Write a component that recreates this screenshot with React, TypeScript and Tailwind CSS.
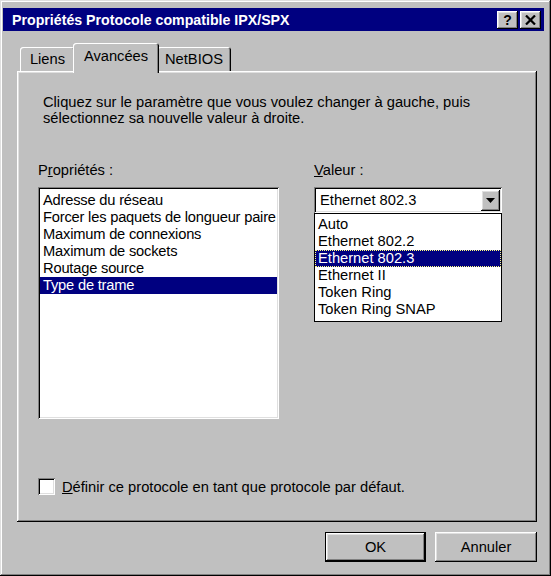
import { useState } from "react"

// Win95 bevels
const raised =
  "shadow-[inset_-1px_-1px_#000,inset_1px_1px_#fff,inset_-2px_-2px_#808080,inset_2px_2px_#dfdfdf]"
const sunken =
  "shadow-[inset_1px_1px_#808080,inset_-1px_-1px_#fff,inset_2px_2px_#000,inset_-2px_-2px_#dfdfdf]"

const PROPERTIES = [
  "Adresse du réseau",
  "Forcer les paquets de longueur paire",
  "Maximum de connexions",
  "Maximum de sockets",
  "Routage source",
  "Type de trame",
]

const VALUES = ["Auto", "Ethernet 802.2", "Ethernet 802.3", "Ethernet II", "Token Ring", "Token Ring SNAP"]

function Tab({ label, active, width }: { label: string; active?: boolean; width: string }) {
  if (active) {
    return (
      <div
        className={`relative z-10 -mx-[2px] -mb-[2px] h-[30px] ${width} flex items-start justify-center pt-[5px] rounded-t-[3px] bg-[#c0c0c0] shadow-[inset_1px_1px_#fff,inset_-1px_0_#000,inset_-2px_0_#808080]`}
      >
        {label}
      </div>
    )
  }
  return (
    <div
      className={`h-[24px] ${width} flex items-start justify-center pt-[4px] rounded-t-[3px] bg-[#c0c0c0] shadow-[inset_1px_1px_#fff,inset_-1px_0_#000,inset_-2px_0_#808080]`}
    >
      {label}
    </div>
  )
}

export default function App() {
  const [prop, setProp] = useState(5)
  const [value, setValue] = useState(2)
  const [isDefault, setIsDefault] = useState(false)

  return (
    <div className="w-[551px] h-[576px] bg-[#c0c0c0] flex flex-col pt-[8px] px-[3px] pb-[3px] font-['Liberation_Sans',Arial,sans-serif] text-[14.7px] leading-[16px] text-black select-none shadow-[inset_-1px_-1px_#000,inset_1px_1px_#dfdfdf,inset_-2px_-2px_#808080,inset_2px_2px_#fff]">
      {/* title bar */}
      <div className="h-[23px] mr-[4px] bg-[#000080] flex items-center pl-[9px] pr-[3px]">
        <span className="flex-1 font-bold text-white text-[14.2px]">Propriétés Protocole compatible IPX/SPX</span>
        <div className="flex gap-[2px]">
          <button className={`w-[21px] h-[18px] bg-[#c0c0c0] flex items-center justify-center font-bold text-[14px] leading-none ${raised}`}>
            ?
          </button>
          <button className={`w-[21px] h-[18px] bg-[#c0c0c0] flex items-center justify-center ${raised}`}>
            <svg width="11" height="10" viewBox="0 0 11 10">
              <path d="M1 0.5 L10 9.5 M10 0.5 L1 9.5" stroke="#000" strokeWidth="2.2" />
            </svg>
          </button>
        </div>
      </div>

      <div className="ml-[14px] mr-[11px] mt-[12px] flex flex-col">
        {/* tabs */}
        <div className="flex items-end h-[28px] pl-[3px] relative z-10">
          <Tab label="Liens" width="w-[55px]" />
          <Tab label="Avancées" width="w-[86px]" active />
          <Tab label="NetBIOS" width="w-[74px]" />
        </div>

        {/* panel */}
        <div className={`h-[451px] flex flex-col pt-[23px] pl-[21px] ${raised}`}>
          <p className="pl-[5px]">
            Cliquez sur le paramètre que vous voulez changer à gauche, puis
            <br />
            sélectionnez sa nouvelle valeur à droite.
          </p>

          <div className="flex gap-[35px] mt-[36px]">
            <div className="w-[241px] flex flex-col">
              <div className="mb-[9px]">
                P<span className="underline">r</span>opriétés :
              </div>
              <div className={`h-[232px] bg-white pt-[5px] px-[2px] ${sunken}`}>
                {PROPERTIES.map((p, i) => (
                  <div
                    key={p}
                    onClick={() => setProp(i)}
                    className={`h-[17px] leading-[17px] pl-[3px] whitespace-nowrap tracking-[-0.2px] ${i === prop ? "bg-[#000080] text-white" : ""}`}
                  >
                    {p}
                  </div>
                ))}
              </div>
            </div>

            <div className="w-[188px] flex flex-col">
              <div className="mb-[9px]">
                <span className="underline">V</span>aleur :
              </div>
              <div className="relative">
                <div className={`h-[26px] bg-white flex items-center p-[2px] ${sunken}`}>
                  <span className="flex-1 pl-[4px]">{VALUES[value]}</span>
                  <div className={`w-[19px] h-[21px] bg-[#c0c0c0] flex items-center justify-center ${raised}`}>
                    <svg width="9" height="5" viewBox="0 0 9 5">
                      <path d="M0 0 H9 L4.5 5 Z" fill="#000" />
                    </svg>
                  </div>
                </div>
                <div className="absolute top-[26px] left-0 w-[188px] h-[109px] bg-white border border-black pt-[2px]">
                  {VALUES.map((v, i) => (
                    <div
                      key={v}
                      onClick={() => setValue(i)}
                      className={`h-[17px] leading-[17px] pl-[3px] ${i === value ? "bg-[#000080] text-white outline-1 outline-dotted outline-[#ffff80] outline-offset-[-1px]" : ""}`}
                    >
                      {v}
                    </div>
                  ))}
                </div>
              </div>
            </div>
          </div>

          <label className="flex items-center mt-[59px]" onClick={() => setIsDefault(!isDefault)}>
            <span className={`w-[17px] h-[17px] bg-white flex items-center justify-center ${sunken}`}>
              {isDefault && (
                <svg width="9" height="9" viewBox="0 0 9 9">
                  <path d="M1 4 L3.5 6.5 L8 1.5" stroke="#000" strokeWidth="2" fill="none" />
                </svg>
              )}
            </span>
            <span className="ml-[7px]">
              <span className="underline">D</span>éfinir ce protocole en tant que protocole par défaut.
            </span>
          </label>
        </div>

        {/* buttons */}
        <div className="flex justify-end gap-[9px] mt-[10px]">
          <button className="w-[101px] h-[30px] bg-[#c0c0c0] shadow-[inset_0_0_0_1px_#000,inset_-2px_-2px_#000,inset_2px_2px_#fff,inset_-3px_-3px_#808080,inset_3px_3px_#dfdfdf]">
            OK
          </button>
          <button className={`w-[102px] h-[30px] bg-[#c0c0c0] ${raised}`}>Annuler</button>
        </div>
      </div>
    </div>
  )
}
